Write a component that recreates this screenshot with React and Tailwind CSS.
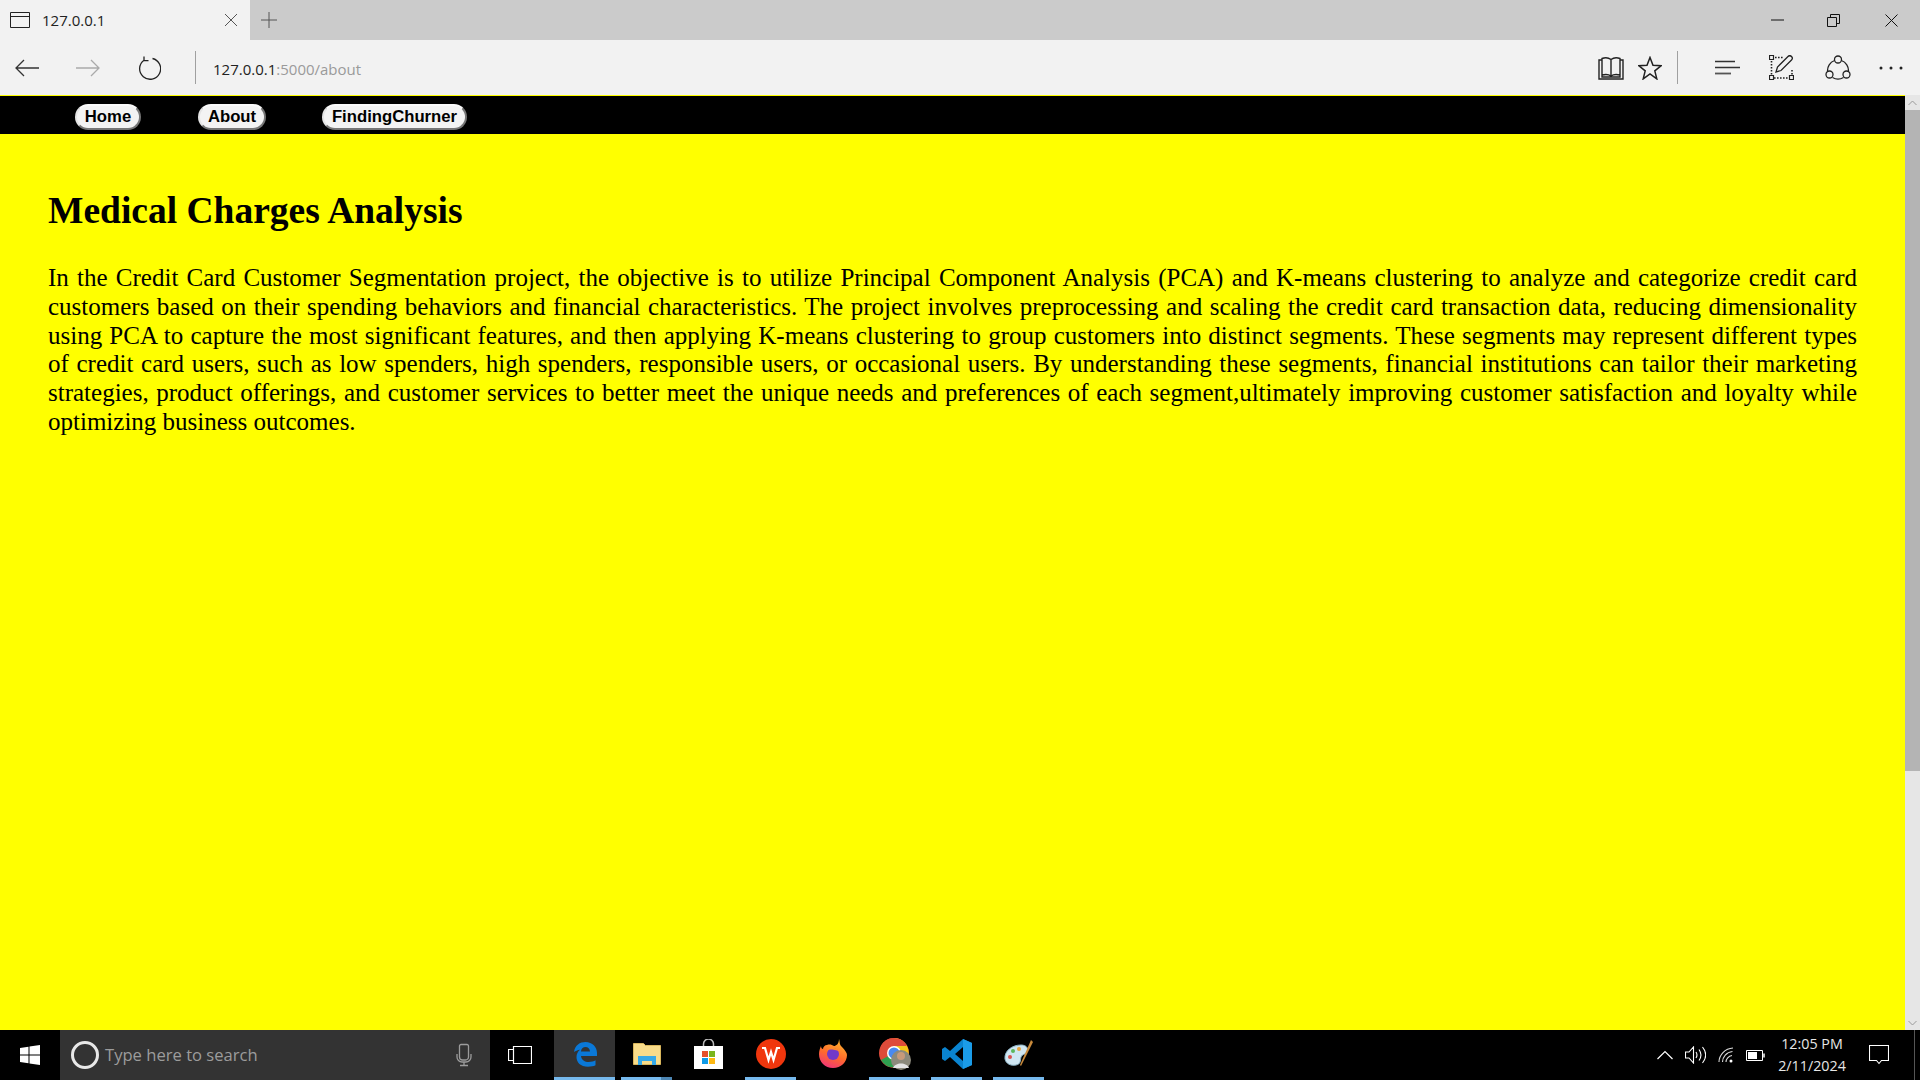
const serif = "font-['Liberation_Serif','Times_New_Roman',serif]";

function Svg({ w, h, children, className = '' }) {
  return (
    <svg width={w} height={h} viewBox={`0 0 ${w} ${h}`} fill="none" className={`shrink-0 ${className}`}>
      {children}
    </svg>
  );
}

function NavButton({ children, className }) {
  return (
    <button className={`h-[26px] rounded-[13px] bg-[#f3f3f3] border-2 border-t-[#fafafa] border-l-[#e4e4e4] border-r-[#767676] border-b-[#767676] text-[16.7px] leading-none font-bold text-black font-['Liberation_Sans',Arial,sans-serif] ${className}`}>
      {children}
    </button>
  );
}

function BrowserChrome() {
  return (
    <div className="shrink-0 font-['Open_Sans','Noto_Sans',sans-serif]">
      <div className="h-10 bg-[#cbcbcb] flex items-center">
        <div className="w-[250px] h-10 bg-[#f2f2f2] flex items-center pl-[10px]">
          <Svg w={20} h={18}>
            <path d="M.5 1.500h19v15H.5zM.5 5.500h19" stroke="#222" />
          </Svg>
          <span className="ml-[12px] text-[15px] text-[#222] flex-1">127.0.0.1</span>
          <Svg w={14} h={14} className="mr-[12px]">
            <path d="M1 1l12 12M13 1L1 13" stroke="#555" />
          </Svg>
        </div>
        <Svg w={18} h={18} className="ml-[10px]">
          <path d="M9 1v16M1 9h16" stroke="#555" />
        </Svg>
        <div className="ml-auto flex items-center">
          <Svg w={13} h={2} className="mr-[43px]"><path d="M0 1h13" stroke="#111" /></Svg>
          <Svg w={13} h={13} className="mr-[45px]">
            <path d="M.5 3.500h9v9h-9zM3.500 3V.5h9v9H10" stroke="#111" />
          </Svg>
          <Svg w={13} h={13} className="mr-[22px]">
            <path d="M.5.500l12 12M12.500.500l-12 12" stroke="#111" />
          </Svg>
        </div>
      </div>
      <div className="h-[55px] bg-[#f2f2f2] flex items-center">
        <Svg w={25} h={18} className="ml-[15px]">
          <path d="M1 9h23M9 1L1 9l8 8" stroke="#333" strokeWidth="1.300" />
        </Svg>
        <Svg w={25} h={18} className="ml-[36px]">
          <path d="M0 9h23M15 1l8 8-8 8" stroke="#aaa" strokeWidth="1.300" />
        </Svg>
        <Svg w={24} h={24} className="ml-[36px]">
          <path d="M7 4.200A10.500 10.500 0 1 0 15.500 2.500M7 .5v4.200h4.500" stroke="#222" strokeWidth="1.300" />
        </Svg>
        <div className="ml-[34px] w-px h-[33px] bg-[#a0a0a0]" />
        <div className="ml-[17px] text-[15px] text-[#222] flex-1 pt-[3px]">
          127.0.0.1<span className="text-[#9a9a9a]">:5000/about</span>
        </div>
        <Svg w={26} h={24} className="mr-[14px]">
          <path d="M1 4h3v17h18V4h3v19H1zM4 19V2.500c4-1.500 7-.5 9 1 2-1.500 5-2.500 9-1V19c-4-1-7-.5-9 1-2-1.500-5-2-9-1zM13 3.500V20" stroke="#222" strokeWidth="1.400" />
        </Svg>
        <Svg w={24} h={24} className="mr-[15px]">
          <path d="M12 1.500l3 7.800 8 .5-6.200 5.100 2 8L12 18l-6.800 4.900 2-8L1 9.800l8-.5z" stroke="#222" strokeWidth="1.500" />
        </Svg>
        <div className="w-px h-[33px] bg-[#a0a0a0] mr-[36px]" />
        <Svg w={26} h={15} className="mr-[29px]">
          <path d="M1 1.500h20M1 7.500h25" stroke="#333" strokeWidth="1.500" />
          <path d="M1 13.500h16" stroke="#555" strokeWidth="1.800" />
        </Svg>
        <Svg w={25} h={25} className="mr-[31px]">
          <path d="M2.500 6v15M5 23h14M23 15v6M6 2.500h9" stroke="#222" strokeWidth="1.600" strokeDasharray="1.600 1.400" />
          <path d="M.5.500h4v4h-4zM.5 20.500h4v4h-4zM20.500 20.500h4v4h-4z" stroke="#222" strokeWidth="1.200" />
          <path d="M7 17l1.500-5L19 1.500c1-1 2.500-1 3.500 0s1 2.500 0 3.500L12 15.500z" stroke="#222" strokeWidth="1.300" />
        </Svg>
        <Svg w={26} h={26} className="mr-[28px]">
          <circle cx="13" cy="4.500" r="3.500" stroke="#222" strokeWidth="1.300" />
          <circle cx="4.500" cy="19.500" r="3.500" stroke="#222" strokeWidth="1.300" />
          <circle cx="21.500" cy="19.500" r="3.500" stroke="#222" strokeWidth="1.300" />
          <path d="M9.600 5.500A10.500 10.500 0 0 0 2.600 16.500M16.400 5.500a10.500 10.500 0 0 1 7 11M7.500 22.500a10.500 10.500 0 0 0 11 0" stroke="#222" strokeWidth="1.300" />
        </Svg>
        <Svg w={24} h={4} className="mr-[17px]">
          <circle cx="2" cy="2" r="1.500" fill="#222" />
          <circle cx="12" cy="2" r="1.500" fill="#222" />
          <circle cx="22" cy="2" r="1.500" fill="#222" />
        </Svg>
      </div>
    </div>
  );
}

function Scrollbar() {
  return (
    <div className="w-[15px] shrink-0 bg-[#e6e6e6] flex flex-col">
      <div className="h-[15px] flex items-center justify-center">
        <Svg w={9} h={6}><path d="M.5 5L4.500 1l4 4" stroke="#9a9a9a" /></Svg>
      </div>
      <div className="h-[661px] bg-[#b4b4b4]" />
      <div className="mt-auto h-[15px] flex items-center justify-center">
        <Svg w={9} h={6}><path d="M.5 1l4 4 4-4" stroke="#9a9a9a" /></Svg>
      </div>
    </div>
  );
}

// one taskbar slot, with the light bar under running apps
function Slot({ children, running, className = '' }) {
  return (
    <div className={`w-[51px] h-full flex flex-col items-center ${className}`}>
      <div className="flex-1 flex items-center">{children}</div>
      <div className={`h-[3px] w-full ${running ? 'bg-[#76b9ed]' : ''}`} />
    </div>
  );
}

function Taskbar() {
  return (
    <div className="h-[50px] shrink-0 bg-black flex items-center font-['Open_Sans','Noto_Sans',sans-serif]">
      <div className="w-[60px] h-full flex items-center justify-center">
        <Svg w={20} h={20}>
          <path d="M0 3l8.500-1.200V9.500H0zM9.500 1.600L20 0v9.500H9.500zM0 10.500h8.500v7.700L0 17zM9.500 10.500H20V20L9.500 18.400z" fill="#fff" />
        </Svg>
      </div>
      <div className="w-[430px] h-full bg-[#333333] flex items-center pl-[11px]">
        <div className="w-[28px] h-[28px] rounded-full border-[3.500px] border-[#e8e8e8]" />
        <span className="ml-[6px] text-[16.600px] text-[#9c9c9c] flex-1">Type here to search</span>
        <Svg w={16} h={24} className="mr-[18px]">
          <path d="M5 1.500h6a1.500 1.500 0 0 1 1.500 1.500v11a3 3 0 0 1-3 3h-3a3 3 0 0 1-3-3V3A1.500 1.500 0 0 1 5 1.500zM1 11v3a5 5 0 0 0 5 5h4a5 5 0 0 0 5-5v-3M8 19v3M4 22.500h8" stroke="#9c9c9c" strokeWidth="1.300" />
        </Svg>
      </div>
      <div className="w-[64px] flex justify-center pr-[4px]">
        <Svg w={24} h={18}>
          <path d="M5.500.5h18v17h-18zM5 3.500H.5v11H5" stroke="#fff" strokeWidth="1.200" />
        </Svg>
      </div>
      <div className="w-[61px] h-full bg-[#333333] flex flex-col items-center">
        <div className="flex-1 flex items-center">
          <Svg w={24} h={26}>
            <path d="M1 11C2 4 7 1 12.500 1 19.500 1 24 6 24 12v3H8c.5 4 4 6 7.500 6 3 0 5.500-.7 7-1.700v5c-2 1-4.500 1.400-7.500 1.400-7.500 0-11.500-4.500-11.500-9.500 0-3 1-5.500 3.500-7.500C4.500 9 2.500 10 1 11zM8 10.500h9c0-2.500-2-4.500-4.500-4.500S8 8 8 10.500z" fill="#0a78d7" />
          </Svg>
        </div>
        <div className="h-[3px] w-full bg-[#76b9ed]" />
      </div>
      <div className="ml-[6px] w-[51px] h-full flex flex-col items-center">
        <div className="flex-1 flex items-center">
          <Svg w={28} h={23}>
            <path d="M.5 1.500h10l2 2h15v19H.5z" fill="#f8dc8a" stroke="#d9b65c" />
            <path d="M5 14h18v9h-4v-4H9v4H5z" fill="#35a9e8" />
          </Svg>
        </div>
        <div className="flex w-full h-[3px]">
          <div className="w-[40px] bg-[#76b9ed]" />
          <div className="flex-1 bg-[#4d86b3]" />
        </div>
      </div>
      <Slot className="ml-[11px]">
        <Svg w={29} h={30}>
          <path d="M9.500 8V5a5 5 0 0 1 10 0v3" stroke="#bbb" strokeWidth="1.500" />
          <path d="M0 7h29v23H0z" fill="#fff" />
          <path d="M8 12h6v6H8z" fill="#e5502b" />
          <path d="M15 12h6v6h-6z" fill="#7ab51d" />
          <path d="M8 19h6v6H8z" fill="#0f9be8" />
          <path d="M15 19h6v6h-6z" fill="#fdb813" />
        </Svg>
      </Slot>
      <Slot running className="ml-[11px]">
        <Svg w={30} h={30}>
          <circle cx="15" cy="15" r="15" fill="#f0360d" />
          <path d="M6 9h3l3.500 12L15 13l2.500 8L21 9h3" stroke="#fff" strokeWidth="2.200" />
        </Svg>
      </Slot>
      <Slot className="ml-[11px]">
        <Svg w={28} h={29}>
          <defs>
            <linearGradient id="fox" x1="0.700" y1="0" x2="0.300" y2="1">
              <stop offset="0" stopColor="#ffb62e" />
              <stop offset="0.550" stopColor="#ff6a2b" />
              <stop offset="1" stopColor="#f0357a" />
            </linearGradient>
          </defs>
          <path d="M20 0c1 3 0 5 3 8 3 3 5 6 5 8 0 7-6 13-14 13S0 23 0 15c0-3 1-6 2-8 0 2 1 3 2 3 0-2 2-4 4-4 3-1 5 0 7 1 2 0 5-2 5-7z" fill="url(#fox)" />
          <circle cx="14" cy="15" r="6" fill="#7139c9" />
          <path d="M8 11c3-3 9-3 12 1-3-1-9-2-12-1z" fill="#ff8a2b" />
        </Svg>
      </Slot>
      <Slot running className="ml-[11px]">
        <Svg w={32} h={32}>
          <circle cx="15" cy="15" r="15" fill="#de4b3a" />
          <path d="M2 22L15 15l13 7a15 15 0 0 1-26 0z" fill="#2ea04f" />
          <path d="M15 0a15 15 0 0 1 13 22L15 15z" fill="#f5c518" />
          <path d="M15 0a15 15 0 0 0-13 8l6 6 7-6h13A15 15 0 0 0 15 0z" fill="#de4b3a" />
          <circle cx="15" cy="15" r="7" fill="#fff" />
          <circle cx="15" cy="15" r="5.500" fill="#4a8af0" />
          <circle cx="22" cy="22" r="10" fill="#8c8a7c" />
          <circle cx="22" cy="18" r="4" fill="#c79a7a" />
          <path d="M14 30c2-6 14-6 16 0z" fill="#e4e4e4" />
        </Svg>
      </Slot>
      <Slot running className="ml-[11px]">
        <Svg w={30} h={30}>
          <path d="M21 0l9 4v22l-9 4-13-12-5 4-3-2V10l3-2 5 4zM21 8l-8 7 8 7z" fill="#0a84d0" />
          <path d="M21 0l9 4v22l-9 4z" fill="#1b9ce8" />
        </Svg>
      </Slot>
      <Slot running className="ml-[11px]">
        <Svg w={30} h={30}>
          <path d="M1 20C0 12 8 6 17 6c5 0 8 3 6 7-2 3-5 2-6 5-1 4 0 7-5 8-5 1-10-1-11-6z" fill="#cfe6f2" stroke="#8fb6c9" />
          <circle cx="6" cy="18" r="2" fill="#d9534f" />
          <circle cx="9" cy="12" r="2" fill="#5cb85c" />
          <circle cx="15" cy="10" r="2" fill="#e8a33d" />
          <path d="M27 1l2 2-12 24-1-1z" fill="#c98a3b" />
        </Svg>
      </Slot>
      <div className="ml-auto h-full flex items-center text-white">
        <Svg w={16} h={10} className="mr-[12px]"><path d="M.5 9L8 1.500 15.500 9" stroke="#fff" strokeWidth="1.200" /></Svg>
        <Svg w={21} h={18} className="mr-[12px]">
          <path d="M.5 6H4L8.500 1v16L4 12H.5zM11 6c1.300 2 1.300 4 0 6M14 3.500c2.500 3.500 2.500 7.500 0 11M17.500 1c4 5 4 11 0 16" stroke="#fff" strokeWidth="1.100" />
        </Svg>
        <Svg w={16} h={16} className="mr-[12px]">
          <path d="M1 15C1 8 7 1.500 15 1M4.500 15c0-5 4-10 10-10.500M8 15c0-3 2.500-6 6-6.500" stroke="#ddd" strokeWidth="1.100" />
          <circle cx="13" cy="14" r="1.500" fill="#fff" />
        </Svg>
        <Svg w={19} h={11} className="mr-[10px]">
          <path d="M.5.500h16v10H.5z" stroke="#fff" />
          <path d="M2 2h9v7H2z" fill="#fff" />
          <path d="M18 3.500v4" stroke="#fff" strokeWidth="1.500" />
        </Svg>
        <div className="w-[74px] text-center text-[14.300px] leading-[22.500px] text-[#e6e6e6]">
          <div>12:05 PM</div>
          <div>2/11/2024</div>
        </div>
        <Svg w={20} h={20} className="ml-[20px] mr-[25px]">
          <path d="M.5.500h19v15h-7L10 18.500l-2.500-3h-7z" stroke="#fff" strokeWidth="1.100" />
        </Svg>
        <div className="w-px h-full bg-[#555555] mr-[5px]" />
      </div>
    </div>
  );
}

export default function App() {
  return (
    <div className="h-screen flex flex-col overflow-hidden bg-[#ffff00]">
      <BrowserChrome />
      <div className="flex-1 flex min-h-0">
        <div className="flex-1 flex flex-col min-w-0">
          <div className="h-px bg-[#ffff00]" />
          <nav className="h-[38px] bg-black flex items-start pt-[8px] pl-[75px]">
            <NavButton className="w-[66px]">Home</NavButton>
            <NavButton className="ml-[57px] w-[68px]">About</NavButton>
            <NavButton className="ml-[56px] w-[145px]">FindingChurner</NavButton>
          </nav>
          <main className={`flex-1 px-[48px] text-black ${serif}`}>
            <h1 className="mt-[55px] text-[37.500px] leading-[43px] font-bold">Medical Charges Analysis</h1>
            <p className="mt-[32px] text-[25px] leading-[28.750px] text-justify">
              In the Credit Card Customer Segmentation project, the objective is to utilize Principal Component Analysis (PCA) and K-means clustering to analyze and categorize credit card customers based on their spending behaviors and financial characteristics. The project involves preprocessing and scaling the credit card transaction data, reducing dimensionality using PCA to capture the most significant features, and then applying K-means clustering to group customers into distinct segments. These segments may represent different types of credit card users, such as low spenders, high spenders, responsible users, or occasional users. By understanding these segments, financial institutions can tailor their marketing strategies, product offerings, and customer services to better meet the unique needs and preferences of each segment,ultimately improving customer satisfaction and loyalty while optimizing business outcomes.
            </p>
          </main>
        </div>
        <Scrollbar />
      </div>
      <Taskbar />
    </div>
  );
}
